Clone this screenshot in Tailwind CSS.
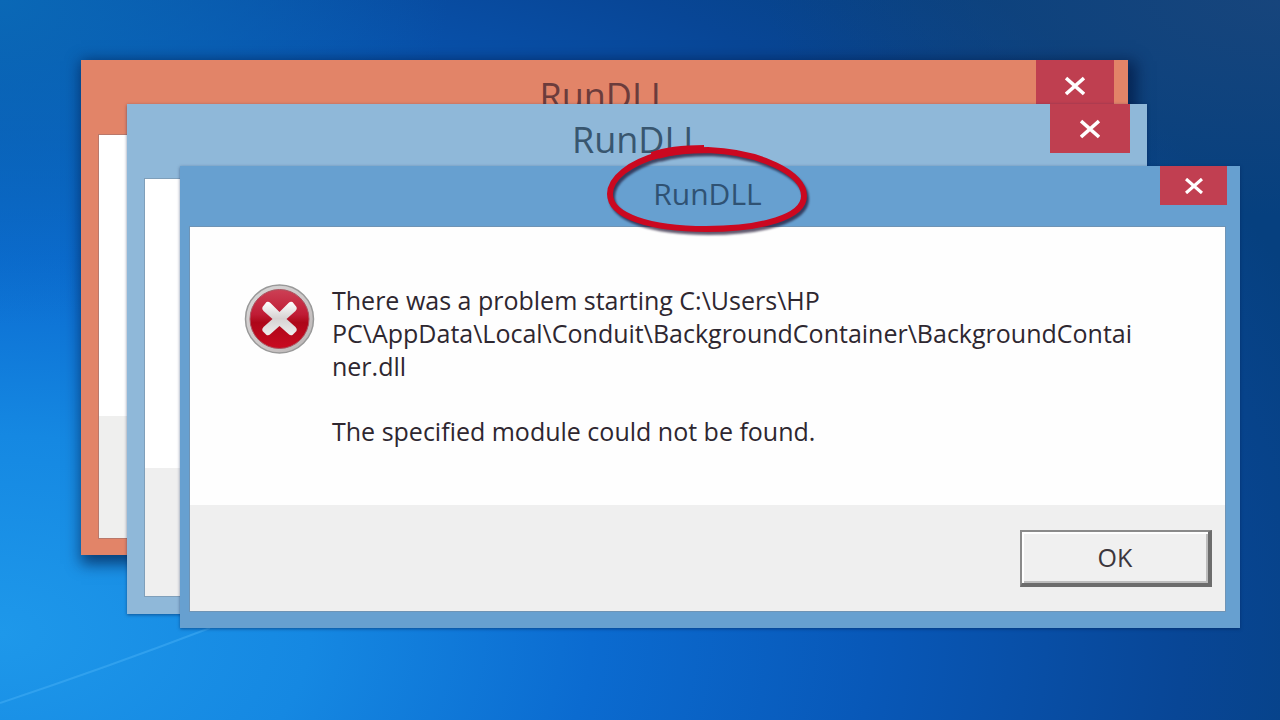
<!DOCTYPE html>
<html lang="en">
  <head>
    <meta charset="UTF-8" />
    <meta name="viewport" content="width=device-width, initial-scale=1.0" />
    <title>RunDLL</title>
    <script src="https://cdn.jsdelivr.net/npm/@tailwindcss/browser@4"></script>
  </head>
  <body class="font-['Open_Sans','Noto_Sans',sans-serif]">
    <!-- Desktop -->
    <main
      class="relative min-h-screen overflow-hidden bg-[radial-gradient(ellipse_40%_30%_at_100%_0%,#17457c_0%,transparent_100%),radial-gradient(ellipse_35%_45%_at_0%_0%,#0a68b6_0%,transparent_100%),radial-gradient(ellipse_110%_125%_at_0%_88%,#1e98ea_0%,#1588e2_22%,#0b6bd0_42%,#0858b8_62%,#084696_84%,#06407f_100%)]"
    >
      <svg
        class="absolute bottom-0 left-0 h-[100px] w-[220px]"
        viewBox="0 0 220 100"
        fill="none"
        aria-hidden="true"
      >
        <path d="M0 83Q105 48 210 8" stroke="#46b0f5" stroke-opacity=".5" stroke-width="2" />
      </svg>

      <!-- Back window -->
      <section
        class="absolute top-[60px] right-[152px] left-[81px] flex h-[495px] flex-col bg-[#e28468] pr-[18px] pb-[17px] pl-[18px] shadow-[4px_5px_14px_4px_rgba(0,20,60,0.65)]"
      >
        <header class="relative flex h-[75px] items-center justify-center pb-1">
          <h2 class="text-[36px] leading-[48px] text-[#6b3c3c]">RunDLL</h2>
          <button
            class="absolute top-0 -right-1 flex h-[48px] w-[78px] items-center justify-center bg-[#bf3f50] text-white"
            aria-label="Close"
          >
            <svg class="mt-1 h-5 w-5" viewBox="0 0 20 20" fill="none" stroke="currentColor" stroke-width="3.6">
              <path d="M1 2l18 16M19 2L1 18" />
            </svg>
          </button>
        </header>
        <div class="flex grow flex-col bg-white outline outline-[#b9786a]">
          <div class="grow"></div>
          <div class="h-[122px] bg-[#efefee]"></div>
        </div>
      </section>

      <!-- Middle window -->
      <section
        class="absolute top-[104px] right-[133px] left-[127px] flex h-[510px] flex-col bg-[#8fb8d9] px-[18px] pb-[18px] shadow-[0_1px_3px_rgba(0,30,80,0.5)]"
      >
        <header class="relative flex h-[75px] items-center justify-center pb-1">
          <h2 class="text-[36px] leading-[48px] text-[#38566f]">RunDLL</h2>
          <button
            class="absolute top-0 -right-px flex h-[49px] w-[80px] items-center justify-center bg-[#bf3f50] text-white"
            aria-label="Close"
          >
            <svg class="h-5 w-5" viewBox="0 0 20 20" fill="none" stroke="currentColor" stroke-width="3.6">
              <path d="M1 2l18 16M19 2L1 18" />
            </svg>
          </button>
        </header>
        <div class="flex grow flex-col bg-white outline outline-[#7f9fba]">
          <div class="grow"></div>
          <div class="h-[128px] bg-[#efefef]"></div>
        </div>
      </section>

      <!-- Front window -->
      <section
        class="absolute top-[166px] right-[40px] left-[180px] flex h-[462px] flex-col bg-[#67a0d0] pr-[15px] pb-[17px] pl-[10px] shadow-[0_1px_3px_rgba(0,30,80,0.5)]"
        role="dialog"
        aria-labelledby="dialogTitle"
      >
        <header class="relative flex h-[61px] items-center justify-center pb-1.5">
          <h1 id="dialogTitle" class="text-[30px] leading-[40px] text-[#2f5273]">RunDLL</h1>
          <button
            class="absolute top-0 -right-[2px] flex h-[39px] w-[67px] items-center justify-center bg-[#c13f51] text-white"
            aria-label="Close"
          >
            <svg class="h-4 w-[18px]" viewBox="0 0 18 16" fill="none" stroke="currentColor" stroke-width="3.2">
              <path d="M1 1l16 14M17 1L1 15" />
            </svg>
          </button>
          <!-- Hand-drawn ring round the title -->
          <svg
            class="pointer-events-none absolute -top-6 left-1/2 z-10 h-[96px] w-[212px] -translate-x-1/2 drop-shadow-[2px_3px_1px_rgba(30,20,50,0.7)]"
            viewBox="0 0 212 96"
            fill="none"
            stroke="#cb0820"
            stroke-width="6"
            aria-hidden="true"
          >
            <path d="M56 14C72 9 88 8 106 8C158 10 202 31 202 54C202 75 160 87 104 87C48 87 8 74 8 52C8 36 28 21 56 13" />
            <path d="M50 14C64 9 80 7 102 7" stroke-width="8" />
          </svg>
        </header>

        <div class="flex grow flex-col bg-[#fefefe] outline outline-[#6f94b5]">
          <div class="flex grow items-start gap-4 pt-[57px] pl-[53px]">
            <svg class="h-[72px] w-[73px] shrink-0" viewBox="0 0 72 72" aria-hidden="true">
              <defs>
                <linearGradient id="rim" x1="0" y1="0" x2="1" y2="1">
                  <stop offset="0" stop-color="#d8d8d8" />
                  <stop offset=".5" stop-color="#cfcaca" />
                  <stop offset="1" stop-color="#b9b4b4" />
                </linearGradient>
                <linearGradient id="ball" x1="0" y1="0" x2="0" y2="1">
                  <stop offset="0" stop-color="#cc4055" />
                  <stop offset=".42" stop-color="#c01c35" />
                  <stop offset=".56" stop-color="#ad0719" />
                  <stop offset="1" stop-color="#c90a20" />
                </linearGradient>
                <linearGradient id="cross" x1="0" y1="0" x2="0" y2="1">
                  <stop offset="0" stop-color="#ffffff" />
                  <stop offset=".5" stop-color="#d6d2d2" />
                  <stop offset="1" stop-color="#eeeeee" />
                </linearGradient>
              </defs>
              <circle cx="36" cy="35" r="34" fill="url(#rim)" stroke="#999" stroke-width="1.5" />
              <circle cx="36" cy="35" r="29.5" fill="url(#ball)" stroke="#a85560" stroke-width="1" />
              <path
                d="M19 23L23 18Q25 17 27 19L36 28L45 19Q47 17 49 18L53 23Q54 25 52 27L43 35L52 43Q54 45 53 47L49 51Q47 52 45 50L36 42L27 50Q25 52 23 51L19 47Q18 45 20 43L29 35L20 27Q18 25 19 23Z"
                fill="url(#cross)"
              />
            </svg>
            <div class="text-[25px] leading-[33px] whitespace-nowrap text-[#2e2730]">
              <p>
                There was a problem starting C:\Users\HP<br />
                PC\AppData\Local\Conduit\BackgroundContainer\BackgroundContai<br />
                ner.dll
              </p>
              <p class="mt-8">The specified module could not be found.</p>
            </div>
          </div>

          <footer class="flex h-[106px] items-start justify-end bg-[#efefef] pt-[25px] pr-[13px]">
            <button
              class="h-[57px] w-[192px] border-t-2 border-r-4 border-b-4 border-l-2 border-t-[#8a8a8a] border-r-[#6c6c6c] border-b-[#6c6c6c] border-l-[#8a8a8a] bg-[#f0f0f0] text-[25px] leading-[33px] text-[#3c363c] shadow-[inset_2px_2px_0_#ffffff,inset_-2px_-2px_0_#bdbdbd]"
            >
              OK
            </button>
          </footer>
        </div>
      </section>
    </main>
  </body>
</html>
